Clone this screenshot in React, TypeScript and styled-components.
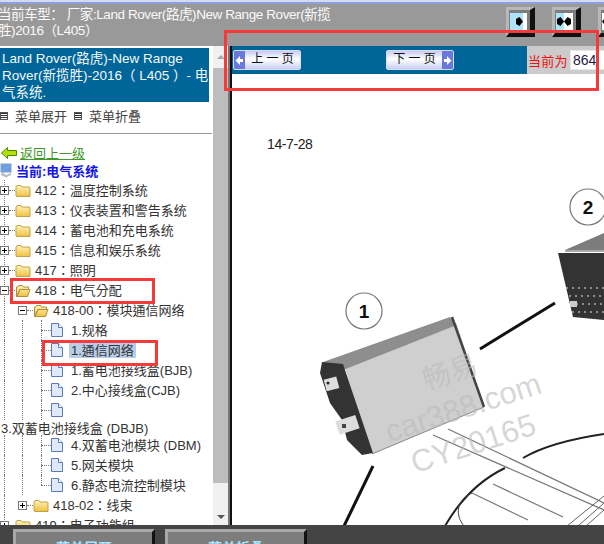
import styled, { createGlobalStyle } from 'styled-components';

const GlobalStyle = createGlobalStyle`
  html, body {
    margin: 0;
    padding: 0;
    background: #fff;
  }
  * {
    box-sizing: border-box;
  }
`;

const FONT = `"Liberation Sans", "Noto Sans CJK SC", sans-serif`;
const TREE_FONT = `"Liberation Sans", "Noto Sans CJK TC", sans-serif`;

const Page = styled.div`
  position: relative;
  width: 604px;
  height: 544px;
  overflow: hidden;
  display: flex;
  flex-direction: column;
  font-family: ${FONT};
  font-size: 13px;
  color: #333;
`;

const TopStrip = styled.div`
  height: 4px;
  flex: none;
  background: linear-gradient(#d5daf2 0, #d5daf2 2px, #8f9fd8 2px, #8f9fd8 4px);
`;

const TitleBar = styled.header`
  height: 42px;
  flex: none;
  background: #999;
  display: flex;
  justify-content: space-between;
`;

const CarTitle = styled.div`
  width: 336px;
  margin-left: -2px;
  padding-top: 3px;
  font-size: 13.5px;
  line-height: 15.5px;
  color: #fafafa;
  letter-spacing: -0.42px;
  white-space: nowrap;
`;

const ToggleGroup = styled.div`
  display: flex;
  gap: 17px;
  padding-top: 3px;
  margin-right: -23px;
`;

const ToggleButton = styled.div`
  width: 29px;
  height: 30px;
  border-style: solid;
  border-width: 3px 5px 4px 3px;
  border-color: #b8b8b8 #111 #111 #b8b8b8;
  background: #7d7d7d;
  padding: 3px 3px 3px 1px;
  display: flex;
`;

const TogglePane = styled.div<{ $tone: 'blue' | 'white'; $size: number }>`
  flex: ${(p) => p.$size};
  background: ${(p) => (p.$tone === 'blue' ? '#aee4fa' : '#fff')};
  display: flex;
  align-items: center;
  justify-content: ${(p) => (p.$tone === 'blue' ? 'flex-end' : 'flex-start')};
`;

const Main = styled.div`
  flex: 1;
  min-height: 0;
  display: flex;
`;

const Sidebar = styled.aside`
  width: 213px;
  flex: none;
  padding-top: 2px;
  overflow: hidden;
  background: #fff;
`;

const Banner = styled.div`
  width: 209px;
  height: 54px;
  background: #006699;
  color: #f4f8fb;
  font-size: 13.5px;
  line-height: 17px;
  padding: 2px 0 0 2px;
`;

const MenuRow = styled.div`
  height: 32px;
  width: 212px;
  display: flex;
  align-items: center;
  padding-bottom: 4px;
  border-bottom: 1px solid #999;
  gap: 7px;
`;

const MenuIcon = styled.span`
  width: 8px;
  height: 8px;
  border: 1px solid #555;
  background: repeating-linear-gradient(#333 0 1px, #fff 1px 2px);
`;

const MenuLabel = styled.span`
  color: #444;
`;

const BackRow = styled.div`
  height: 19px;
  margin-top: 9px;
  display: flex;
  align-items: center;
  gap: 3px;
  padding-left: 1px;
`;

const BackLink = styled.a`
  color: #3f9a2a;
  text-decoration: underline;
`;

const CurrentRow = styled.div`
  height: 17px;
  display: flex;
  align-items: center;
  gap: 4px;
  color: #1414ee;
  font-weight: 700;
`;

const Tree = styled.div`
  margin-top: 1px;
  font-family: ${TREE_FONT};
`;

const Row = styled.div<{ $spine?: boolean }>`
  height: 20px;
  display: flex;
  align-items: center;
  white-space: nowrap;
  background: ${(p) =>
    p.$spine ? 'linear-gradient(#777 50%, transparent 50%) 4px 0 / 1px 2px repeat-y' : 'none'};
`;

const WrappedLine = styled.div`
  height: 15px;
  line-height: 17px;
  margin-left: 1px;
  white-space: nowrap;
`;

const Guide = styled.span`
  width: 18px;
  align-self: stretch;
  flex: none;
  margin-left: 4px;
  margin-right: -4px;
  border-left: 1px dotted #777;
`;

const Expander = styled.span<{ $open?: boolean }>`
  position: relative;
  width: 9px;
  height: 9px;
  flex: none;
  background: #fff;
  border: 1px solid #777;

  &::before {
    content: '';
    position: absolute;
    left: 1px;
    right: 1px;
    top: 3px;
    height: 1px;
    background: #000;
  }
  &::after {
    content: '';
    display: ${(p) => (p.$open ? 'none' : 'block')};
    position: absolute;
    top: 1px;
    bottom: 1px;
    left: 3px;
    width: 1px;
    background: #000;
  }
`;

const Stub = styled.span`
  width: 6px;
  flex: none;
  border-top: 1px dotted #777;
`;

const Bend = styled.span<{ $last?: boolean }>`
  position: relative;
  width: 10px;
  height: 20px;
  flex: none;
  margin-left: 5px;

  &::before {
    content: '';
    position: absolute;
    left: 0;
    top: 0;
    height: ${(p) => (p.$last ? '50%' : '100%')};
    border-left: 1px dotted #777;
  }
  &::after {
    content: '';
    position: absolute;
    left: 0;
    right: 0;
    top: 50%;
    border-top: 1px dotted #777;
  }
`;

const Label = styled.span<{ $gap: number; $selected?: boolean }>`
  margin-left: ${(p) => p.$gap}px;
  padding: 0 2px;
  height: 15px;
  line-height: 15px;
  background: ${(p) => (p.$selected ? '#b9cde8' : 'transparent')};
`;

const FolderSvg = styled.svg`
  flex: none;
`;

const DocSvg = styled.svg`
  flex: none;
`;

const Scrollbar = styled.div`
  width: 15px;
  flex: none;
  background: #f0f0f0;
  display: flex;
  flex-direction: column;
  align-items: center;
`;

const ScrollArrow = styled.div<{ $up?: boolean }>`
  height: ${(p) => (p.$up ? 22 : 17)}px;
  flex: none;
  display: flex;
  align-items: center;
  margin-top: ${(p) => (p.$up ? 0 : 'auto')};

  &::before {
    content: '';
    border-left: 4px solid transparent;
    border-right: 4px solid transparent;
    border-bottom: ${(p) => (p.$up ? '4px solid #a8a8a8' : '0')};
    border-top: ${(p) => (p.$up ? '0' : '4px solid #555')};
  }
`;

const ScrollThumb = styled.div`
  width: 100%;
  height: 415px;
  flex: none;
  background: #bdbdbd;
`;

const Divider = styled.div`
  width: 4px;
  flex: none;
  background: linear-gradient(90deg, #777 0, #777 2px, #111 2px, #111 4px);
`;

const Content = styled.main`
  flex: 1;
  min-width: 0;
  display: flex;
  flex-direction: column;
  background: #fff;
`;

const NavBar = styled.nav`
  height: 28px;
  flex: none;
  display: flex;
`;

const NavBlue = styled.div`
  width: 295px;
  flex: none;
  background: #006699;
  padding: 4px 0 0 1px;
  display: flex;
  gap: 85px;
  align-items: flex-start;
`;

const PageButton = styled.button<{ $reverse?: boolean }>`
  width: 68px;
  height: 20px;
  padding: 0;
  display: flex;
  flex-direction: ${(p) => (p.$reverse ? 'row-reverse' : 'row')};
  border: 1px solid #d9ddf6;
  border-radius: 2px;
  overflow: hidden;
  background: linear-gradient(#c6cbf1, #ffffff 45%, #c9cef3);
  font: inherit;
  font-size: 12px;
  color: #111;
`;

const PageArrow = styled.span`
  width: 11px;
  height: 100%;
  flex: none;
  background: #6a78dc;
  display: flex;
  align-items: center;
  justify-content: center;
`;

const PageText = styled.span`
  flex: 1;
  line-height: 17px;
  text-align: center;
  white-space: pre;
`;

const NavPager = styled.div`
  flex: 1;
  min-width: 0;
  background: #cbcbcb;
  display: flex;
  align-items: center;
  padding-left: 1px;
  gap: 2px;
  color: #ee1111;
  letter-spacing: 0.3px;
  white-space: nowrap;
`;

const PageInput = styled.input`
  width: 40px;
  height: 20px;
  flex: none;
  border: 1px solid #e8e8e8;
  padding: 0 2px;
  font: inherit;
  font-size: 14px;
  color: #1a1a3a;
  background: #fff;
`;

const Diagram = styled.svg`
  flex: 1;
  min-height: 0;
  display: block;
`;

const BottomBar = styled.footer`
  height: 19px;
  flex: none;
  background: #444;
  display: flex;
  gap: 10px;
  padding: 4px 0 0 13px;
  overflow: hidden;
`;

const BottomButton = styled.div`
  width: 142px;
  height: 28px;
  flex: none;
  border-style: solid;
  border-width: 3px 3px 0 3px;
  border-color: #a8a8a8 #111 #a8a8a8 #a8a8a8;
  background: #7d7d7d;
  color: #a8e4ff;
  font-size: 14px;
  font-weight: 700;
  text-align: center;
  line-height: 32px;
`;

const Annotation = styled.div<{ $x: number; $y: number; $w: number; $h: number }>`
  position: absolute;
  left: ${(p) => p.$x}px;
  top: ${(p) => p.$y}px;
  width: ${(p) => p.$w}px;
  height: ${(p) => p.$h}px;
  border: 3px solid #f53a3a;
  pointer-events: none;
`;

function FolderIcon({ open }: { open?: boolean }) {
  return (
    <FolderSvg width="16" height="15" viewBox="0 0 16 15">
      <defs>
        <linearGradient id="fold" x1="0" y1="0" x2="0" y2="1">
          <stop offset="0" stopColor="#fff4b8" />
          <stop offset="1" stopColor="#f0c040" />
        </linearGradient>
      </defs>
      {open ? (
        <path
          d="M1.5 13.5V4h1l1-1.500h4l1 1.500h5v2.500H5L2 13.500h10.500l2.500-7H5z"
          fill="url(#fold)"
          stroke="#b09040"
        />
      ) : (
        <path
          d="M1 4l1-1.500h4l1 1.500h7.500l.5 1v8.500H1.500L1 13z"
          fill="url(#fold)"
          stroke="#c0a048"
        />
      )}
    </FolderSvg>
  );
}

function DocIcon() {
  return (
    <DocSvg width="12" height="14" viewBox="0 0 12 14">
      <path d="M.5.500h7l4 4v9H.500z" fill="#dfe9fb" stroke="#5a7ab8" />
      <path d="M7.500.500v4h4" fill="#fff" stroke="#5a7ab8" />
    </DocSvg>
  );
}

function BackArrow() {
  return (
    <svg width="16" height="12" viewBox="0 0 16 12">
      <path d="M.5 6L6.500.500v3h9v5h-9v3z" fill="#b6e000" stroke="#3f8a10" />
    </svg>
  );
}

function ComputerIcon() {
  return (
    <DocSvg width="12" height="15" viewBox="0 0 12 15">
      <rect x="1" y="1" width="10" height="8" fill="#6aa0e8" stroke="#8a9ab8" />
      <path d="M2 9l4 3 5-2v2l-5 2.500L1 12z" fill="#b4bcc8" />
    </DocSvg>
  );
}

function DiamondGlyph({ flip }: { flip?: boolean }) {
  return (
    <svg width="7" height="9" viewBox="0 0 7 9">
      <path d={flip ? 'M0 4.500L3.500 0 7 2v5L3.500 9z' : 'M7 4.500L3.500 0 0 2v5l3.500 2z'} fill="#000" />
    </svg>
  );
}

function PageChevron({ right }: { right?: boolean }) {
  return (
    <svg width="9" height="9" viewBox="0 0 9 9">
      <path d={right ? 'M1 3h3V0l4.500 4.500L4 9V6H1z' : 'M8 3H5V0L.500 4.500 5 9V6h3z'} fill="#fff" />
    </svg>
  );
}

type TreeItem = {
  label: string;
  kind: 'top' | 'sub' | 'doc';
  open?: boolean;
  selected?: boolean;
  last?: boolean;
};

const before: TreeItem[] = [
  { label: '412：温度控制系统', kind: 'top' },
  { label: '413：仪表装置和警告系统', kind: 'top' },
  { label: '414：蓄电池和充电系统', kind: 'top' },
  { label: '415：信息和娱乐系统', kind: 'top' },
  { label: '417：照明', kind: 'top' },
  { label: '418：电气分配', kind: 'top', open: true },
  { label: '418-00：模块通信网络', kind: 'sub', open: true },
  { label: '1.规格', kind: 'doc' },
  { label: '1.通信网络', kind: 'doc', selected: true },
  { label: '1.蓄电池接线盒(BJB)', kind: 'doc' },
  { label: '2.中心接线盒(CJB)', kind: 'doc' },
  { label: '', kind: 'doc' },
];

const after: TreeItem[] = [
  { label: '4.双蓄电池模块 (DBM)', kind: 'doc' },
  { label: '5.网关模块', kind: 'doc' },
  { label: '6.静态电流控制模块', kind: 'doc', last: true },
  { label: '418-02：线束', kind: 'sub' },
  { label: '419：电子功能组', kind: 'top' },
];

function TreeRow({ item }: { item: TreeItem }) {
  if (item.kind === 'top') {
    return (
      <Row $spine>
        <Expander $open={item.open} />
        <Stub />
        <FolderIcon open={item.open} />
        <Label $gap={2}>{item.label}</Label>
      </Row>
    );
  }
  if (item.kind === 'sub') {
    return (
      <Row>
        <Guide />
        <Expander $open={item.open} />
        <Stub />
        <FolderIcon open={item.open} />
        <Label $gap={2}>{item.label}</Label>
      </Row>
    );
  }
  return (
    <Row>
      <Guide />
      <Guide />
      <Bend $last={item.last} />
      <DocIcon />
      <Label $gap={6} $selected={item.selected}>
        {item.label}
      </Label>
    </Row>
  );
}

function WiringDiagram() {
  return (
    <Diagram viewBox="232 74 372 451" preserveAspectRatio="xMinYMin slice">
      <text x="267" y="149" fontFamily="Liberation Sans" fontSize="14" letterSpacing="-0.4" fill="#222">
        14-7-28
      </text>

      <circle cx="364" cy="311" r="18" fill="#fff" stroke="#777" strokeWidth="1.2" />
      <text x="364" y="318" textAnchor="middle" fontFamily="Liberation Sans" fontWeight="700" fontSize="19" fill="#111">
        1
      </text>
      <circle cx="588" cy="207" r="18" fill="#fff" stroke="#777" strokeWidth="1.2" />
      <text x="588" y="214" textAnchor="middle" fontFamily="Liberation Sans" fontWeight="700" fontSize="19" fill="#111">
        2
      </text>

      {/* module 1 */}
      <polygon points="345,368 457,325 484,407 372,454" fill="#cfcfcf" />
      <polygon points="323,362 450,317 457,325 343,370" fill="#8e8e8e" />
      <polygon points="322,362 343,364 373,453 362,455 347,440 342,420 330,403 320,373" fill="#333" />
      <rect x="325" y="378" width="13" height="12" fill="#ddd" transform="rotate(-15 331 384)" />
      <circle cx="328" cy="383" r="1.500" fill="#222" />
      <rect x="337" y="418" width="21" height="14" fill="#ddd" transform="rotate(-18 347 425)" />
      <rect x="342" y="424" width="4" height="4" fill="#444" />
      <path d="M452 317L484 407" stroke="#444" strokeWidth="2.500" />
      <path d="M372 454L484 407" stroke="#888" strokeWidth="1" />

      {/* module 2 */}
      <polygon points="565,250 604,233 604,250" fill="#7c7c7c" />
      <rect x="565" y="250" width="39" height="2" fill="#aaa" />
      <polygon points="558,253 604,253 604,320 573,317" fill="#333" />
      <path d="M566 288h38M569 296h35M570 304h34M572 312h32" stroke="#aaa" strokeWidth="1.500" strokeDasharray="2 4" />
      <rect x="570" y="301" width="7" height="6" fill="#ccc" />

      {/* cables and bodywork */}
      <path d="M555 303L480 349" stroke="#111" strokeWidth="3" />
      <path d="M373 466L344 526" stroke="#111" strokeWidth="3" />
      <path d="M604 434C570 439 540 448 523 458" stroke="#222" strokeWidth="2" fill="none" />
      <path d="M505 468C480 480 460 500 445 526" stroke="#222" strokeWidth="2" fill="none" />
      <path d="M448 429L604 503M433 435L604 510" stroke="#777" strokeWidth="1.200" />
      <path d="M493 484L563 517M472 493L528 520" stroke="#777" strokeWidth="1.200" />
      <path d="M472 493C456 500 455 515 464 526" stroke="#444" strokeWidth="1" fill="none" />
      <path d="M567 526L604 496M578 526L604 503M586 526L604 510" stroke="#666" strokeWidth="1" />

      {/* watermark */}
      <g fontFamily="Liberation Sans, Noto Sans CJK SC" fill="#bbb" fillOpacity="0.6">
        <text x="450" y="382" textAnchor="middle" fontSize="28" transform="rotate(-18 450 372)">
          畅易
        </text>
        <text x="463" y="418" textAnchor="middle" fontSize="31" transform="rotate(-18 463 407)">
          car388.com
        </text>
        <text x="473" y="454" textAnchor="middle" fontSize="31" transform="rotate(-18 473 443)">
          CY20165
        </text>
      </g>
    </Diagram>
  );
}

export default function App() {
  return (
    <Page>
      <GlobalStyle />
      <TopStrip />
      <TitleBar>
        <CarTitle>
          当前车型： 厂家:Land Rover(路虎)New Range Rover(新揽
          <br />
          胜)2016（L405）
        </CarTitle>
        <ToggleGroup>
          <ToggleButton>
            <TogglePane $tone="blue" $size={13}>
              <DiamondGlyph />
            </TogglePane>
            <TogglePane $tone="white" $size={4} />
          </ToggleButton>
          <ToggleButton>
            <TogglePane $tone="blue" $size={8}>
              <DiamondGlyph />
            </TogglePane>
            <TogglePane $tone="white" $size={9}>
              <DiamondGlyph flip />
            </TogglePane>
          </ToggleButton>
          <ToggleButton>
            <TogglePane $tone="white" $size={13}>
              <DiamondGlyph flip />
            </TogglePane>
            <TogglePane $tone="blue" $size={4} />
          </ToggleButton>
        </ToggleGroup>
      </TitleBar>
      <Main>
        <Sidebar>
          <Banner>Land Rover(路虎)-New Range Rover(新揽胜)-2016（ L405 ）- 电气系统.</Banner>
          <MenuRow>
            <MenuIcon />
            <MenuLabel>菜单展开</MenuLabel>
            <MenuIcon />
            <MenuLabel>菜单折叠</MenuLabel>
          </MenuRow>
          <BackRow>
            <BackArrow />
            <BackLink>返回上一级</BackLink>
          </BackRow>
          <CurrentRow>
            <ComputerIcon />
            当前:电气系统
          </CurrentRow>
          <Tree>
            {before.map((item) => (
              <TreeRow key={item.label || 'blank'} item={item} />
            ))}
            <WrappedLine>3.双蓄电池接线盒 (DBJB)</WrappedLine>
            {after.map((item) => (
              <TreeRow key={item.label} item={item} />
            ))}
          </Tree>
        </Sidebar>
        <Scrollbar>
          <ScrollArrow $up />
          <ScrollThumb />
          <ScrollArrow />
        </Scrollbar>
        <Divider />
        <Content>
          <NavBar>
            <NavBlue>
              <PageButton>
                <PageArrow>
                  <PageChevron />
                </PageArrow>
                <PageText>上 一 页</PageText>
              </PageButton>
              <PageButton $reverse>
                <PageArrow>
                  <PageChevron right />
                </PageArrow>
                <PageText>下 一 页</PageText>
              </PageButton>
            </NavBlue>
            <NavPager>
              当前为
              <PageInput readOnly value="864" />
            </NavPager>
          </NavBar>
          <WiringDiagram />
        </Content>
      </Main>
      <BottomBar>
        <BottomButton>菜单展开</BottomButton>
        <BottomButton>菜单折叠</BottomButton>
      </BottomBar>
      <Annotation $x={224} $y={30} $w={375} $h={61} />
      <Annotation $x={10} $y={278} $w={145} $h={26} />
      <Annotation $x={42} $y={340} $w={116} $h={26} />
    </Page>
  );
}
